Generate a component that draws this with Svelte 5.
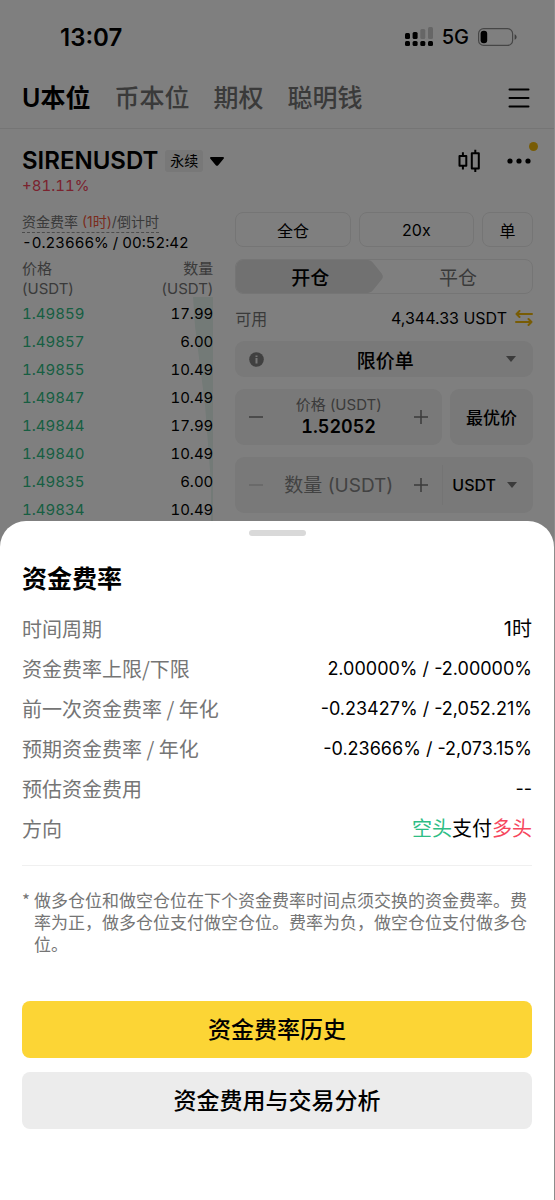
<script>
  const tabs = ['U本位', '币本位', '期权', '聪明钱'];
  let activeTab = $state('U本位');

  const bids = [
    { price: '1.49859', amount: '17.99' },
    { price: '1.49857', amount: '6.00' },
    { price: '1.49855', amount: '10.49' },
    { price: '1.49847', amount: '10.49' },
    { price: '1.49844', amount: '17.99' },
    { price: '1.49840', amount: '10.49' },
    { price: '1.49835', amount: '6.00' },
    { price: '1.49834', amount: '10.49' },
  ];

  const details = [
    { label: '时间周期', value: '1时', text: true },
    { label: '资金费率上限/下限', value: '2.00000% / -2.00000%' },
    { label: '前一次资金费率 / 年化', value: '-0.23427% / -2,052.21%' },
    { label: '预期资金费率 / 年化', value: '-0.23666% / -2,073.15%' },
    { label: '预估资金费用', value: '--' },
  ];

  let price = $state('1.52052');
  let quantity = $state('');

  function stepPrice(direction) {
    price = (Number(price) + direction * 0.00001).toFixed(5);
  }

  function stepQuantity(direction) {
    quantity = String(Math.max(0, Number(quantity) + direction));
  }
</script>

<div class="screen">
  <div class="status-bar">
    <span class="clock">13:07</span>
    <div class="status-icons">
      <svg width="28" height="20" viewBox="0 0 28 20" aria-hidden="true">
        <rect x="0" y="6" width="5" height="6" rx="1.5" />
        <rect x="7.6" y="5" width="5" height="7" rx="1.5" />
        <rect x="15.3" y="2" width="5" height="10" rx="1.5" opacity="0.2" />
        <rect x="23" y="0" width="5" height="12" rx="1.5" opacity="0.2" />
        <rect x="0" y="14" width="5" height="5" rx="1.5" />
        <rect x="7.6" y="14" width="5" height="5" rx="1.5" />
        <rect x="15.3" y="14" width="5" height="5" rx="1.5" />
        <rect x="23" y="14" width="5" height="5" rx="1.5" />
      </svg>
      <span class="network">5G</span>
      <svg width="39" height="18" viewBox="0 0 39 18" aria-hidden="true">
        <rect x="0.6" y="0.6" width="34" height="16.8" rx="5" fill="none" stroke="#000" stroke-opacity="0.45" stroke-width="1.2" />
        <rect x="2.6" y="2.8" width="6.6" height="12.4" rx="3" />
        <path d="M36.6 6.2c1.4.5 2 1.600 2 2.800s-.6 2.300-2 2.800z" opacity="0.5" />
      </svg>
    </div>
  </div>

  <nav class="tabs">
    {#each tabs as tab}
      <button class="tab" class:active={tab === activeTab} onclick={() => (activeTab = tab)}>{tab}</button>
    {/each}
    <button class="icon-btn menu" aria-label="菜单">
      <svg width="22" height="20" viewBox="0 0 22 20" fill="none" stroke="#000" stroke-width="2" stroke-linecap="round">
        <path d="M1.500 1.600h19M1.500 10h19M1.500 18.400h19" />
      </svg>
    </button>
  </nav>

  <header class="symbol">
    <div>
      <button class="symbol-name">
        <span class="pair">SIRENUSDT</span>
        <span class="badge">永续</span>
        <svg width="14" height="9" viewBox="0 0 14 9" aria-hidden="true">
          <path d="M1.200 0h11.600c1 0 1.500 1 .8 1.800L8 8.400c-.5.600-1.500.600-2 0L.4 1.800C-.3 1 .2 0 1.200 0z" />
        </svg>
      </button>
      <div class="change">+81.11%</div>
    </div>
    <div class="symbol-actions">
      <button class="icon-btn" aria-label="K线">
        <svg width="24" height="24" viewBox="0 0 24 24" fill="none" stroke="#000" stroke-width="2">
          <path d="M1.500 7h6.800v9.800H1.500zM4.900 3.200V7M4.900 16.800v3.800M13.800 4.200h7v15.400h-7zM17.300.8v3.400M17.300 19.600V23" stroke-linejoin="round" />
        </svg>
      </button>
      <button class="icon-btn more" aria-label="更多">
        <svg width="26" height="6" viewBox="0 0 26 6">
          <circle cx="4" cy="3" r="2.600" /><circle cx="13" cy="3" r="2.600" /><circle cx="22" cy="3" r="2.600" />
        </svg>
        <span class="dot"></span>
      </button>
    </div>
  </header>

  <main class="trade">
    <section class="book">
      <div class="funding-label">资金费率 <em>(1时)</em>/倒计时</div>
      <div class="funding-value">-0.23666% / 00:52:42</div>
      <div class="depth">
        <svg viewBox="0 0 20 230" preserveAspectRatio="none" aria-hidden="true">
          <path d="M0 0H20V230H18V190L15 150L12 110L7 70L2 30z" fill="#e6f5ee" />
        </svg>
        <table>
          <thead>
            <tr><th>价格<br />(USDT)</th><th>数量<br />(USDT)</th></tr>
          </thead>
          <tbody>
            {#each bids as bid}
              <tr><td class="bid">{bid.price}</td><td>{bid.amount}</td></tr>
            {/each}
          </tbody>
        </table>
      </div>
    </section>

    <section class="order">
      <div class="modes">
        <button>全仓</button>
        <button>20x</button>
        <button class="narrow">单</button>
      </div>
      <div class="sides">
        <svg viewBox="0 0 150 36" preserveAspectRatio="none" aria-hidden="true">
          <path d="M0 0H134Q137 0 139 3L148 15Q150 18 148 21L139 33Q137 36 134 36H0z" fill="#e2e2e2" />
        </svg>
        <button class="open">开仓</button>
        <button class="close">平仓</button>
      </div>
      <div class="available">
        <span class="muted">可用</span>
        <span class="balance">4,344.33 USDT</span>
        <button class="icon-btn" aria-label="划转">
          <svg width="18" height="16" viewBox="0 0 18 16" fill="none" stroke="#f0b90b" stroke-width="2" stroke-linecap="round" stroke-linejoin="round">
            <path d="M17 4H1.500M4.500 1l-3 3 3 3M1 12h15.500M13.500 9l3 3-3 3" />
          </svg>
        </button>
      </div>
      <button class="field order-type">
        <svg width="15" height="15" viewBox="0 0 15 15" aria-hidden="true">
          <circle cx="7.500" cy="7.500" r="7.300" fill="#808080" />
          <path d="M6.500 3.500h2v1.600h-2zM6.500 6h2v5.500h-2z" fill="#eee" />
        </svg>
        <span>限价单</span>
        <svg width="10" height="6" viewBox="0 0 10 6" aria-hidden="true"><path d="M0 0h10L5 6z" fill="#777" /></svg>
      </button>
      <div class="price-row">
        <div class="field stepper">
          <button class="step" aria-label="减少价格" onclick={() => stepPrice(-1)}>
            <svg width="16" height="16" viewBox="0 0 16 16"><path d="M1 8h14" /></svg>
          </button>
          <div class="stepper-body">
            <label for="price">价格 (USDT)</label>
            <input id="price" class="price" bind:value={price} />
          </div>
          <button class="step" aria-label="增加价格" onclick={() => stepPrice(1)}>
            <svg width="16" height="16" viewBox="0 0 16 16"><path d="M1 8h14M8 1v14" /></svg>
          </button>
        </div>
        <button class="field best">最优价</button>
      </div>
      <div class="field quantity-row">
        <div class="stepper">
          <button class="step faint" aria-label="减少数量" onclick={() => stepQuantity(-1)}>
            <svg width="16" height="16" viewBox="0 0 16 16"><path d="M1 8h14" /></svg>
          </button>
          <input class="quantity" aria-label="数量" placeholder="数量 (USDT)" bind:value={quantity} />
          <button class="step" aria-label="增加数量" onclick={() => stepQuantity(1)}>
            <svg width="16" height="16" viewBox="0 0 16 16"><path d="M1 8h14M8 1v14" /></svg>
          </button>
        </div>
        <button class="unit">
          USDT
          <svg width="10" height="6" viewBox="0 0 10 6" aria-hidden="true"><path d="M0 0h10L5 6z" fill="#777" /></svg>
        </button>
      </div>
    </section>
  </main>

  <div class="backdrop"></div>

  <div class="sheet" role="dialog" aria-labelledby="sheet-title">
    <div class="handle"></div>
    <h2 id="sheet-title">资金费率</h2>
    <dl>
      {#each details as row}
        <div class="detail">
          <dt>{row.label}</dt>
          <dd class:text={row.text}>{row.value}</dd>
        </div>
      {/each}
      <div class="detail">
        <dt>方向</dt>
        <dd class="text"><span class="short">空头</span>支付<span class="long">多头</span></dd>
      </div>
    </dl>
    <div class="note">
      <span>*</span>
      <p>做多仓位和做空仓位在下个资金费率时间点须交换的资金费率。费率为正，做多仓位支付做空仓位。费率为负，做空仓位支付做多仓位。</p>
    </div>
    <button class="action primary">资金费率历史</button>
    <button class="action">资金费用与交易分析</button>
  </div>
</div>

<style>
  :global(body) {
    background: #fff;
  }

  .screen {
    position: relative;
    min-height: 100vh;
    box-sizing: border-box;
    overflow: hidden;
    border-right: 1px solid #8c8c8c;
    background: #fff;
    color: #000;
    font-family: Inter, 'Noto Sans CJK SC', sans-serif;
    font-size: 16px;
  }

  button,
  input {
    margin: 0;
    padding: 0;
    border: 0;
    background: none;
    color: inherit;
    font: inherit;
  }

  button {
    cursor: pointer;
  }

  svg {
    display: block;
    flex: none;
  }

  .icon-btn {
    display: flex;
    align-items: center;
  }

  .muted {
    color: #757575;
  }

  .status-bar {
    display: flex;
    align-items: center;
    justify-content: space-between;
    height: 74px;
    padding: 0 37px 0 60px;
  }

  .clock {
    font-size: 24px;
    font-weight: 600;
  }

  .status-icons {
    display: flex;
    align-items: center;
    gap: 9px;
  }

  .network {
    font-size: 20px;
    font-weight: 500;
  }

  .tabs {
    display: flex;
    align-items: center;
    gap: 24px;
    height: 48px;
    padding: 0 24px 6px 22px;
    border-bottom: 1px solid #eaeaea;
  }

  .tab {
    color: #757575;
    font-size: 25px;
    font-weight: 500;
    line-height: 36px;
  }

  .tab.active {
    color: #000;
    font-weight: 600;
  }

  .menu {
    margin-left: auto;
  }

  .symbol {
    display: flex;
    align-items: flex-start;
    justify-content: space-between;
    padding: 16px 22px 0;
  }

  .symbol-name {
    display: flex;
    align-items: center;
    gap: 7px;
    line-height: 32px;
  }

  .pair {
    font-size: 24px;
    font-weight: 600;
  }

  .badge {
    padding: 0 5px;
    border-radius: 3px;
    background: #f0f0f0;
    font-size: 14px;
    line-height: 22px;
  }

  .change {
    color: #f6465d;
    font-size: 15px;
    font-variant-numeric: tabular-nums;
    line-height: 17px;
  }

  .symbol-actions {
    display: flex;
    align-items: center;
    gap: 24px;
    height: 32px;
  }

  .more {
    position: relative;
  }

  .dot {
    position: absolute;
    top: -16px;
    right: -6px;
    width: 9px;
    height: 9px;
    border-radius: 50%;
    background: #f0b90b;
  }

  .trade {
    display: flex;
    gap: 22px;
    padding: 18px 21px 0 22px;
  }

  .book {
    flex: 9;
    min-width: 0;
  }

  .funding-label {
    width: fit-content;
    border-bottom: 1px dashed #999;
    color: #757575;
    font-size: 14px;
    line-height: 20px;
  }

  .funding-label em {
    color: #f5593d;
    font-style: normal;
  }

  .funding-value {
    font-size: 15px;
    font-variant-numeric: tabular-nums;
    line-height: 20px;
    white-space: nowrap;
  }

  .depth {
    position: relative;
    margin-top: 6px;
  }

  .depth svg {
    position: absolute;
    right: 0;
    bottom: 0;
    width: 20px;
    height: 226px;
  }

  table {
    position: relative;
    width: 100%;
    border-collapse: collapse;
  }

  th,
  td {
    padding: 0;
    text-align: left;
  }

  th {
    color: #757575;
    font-size: 15px;
    font-weight: 400;
    line-height: 20px;
  }

  td {
    height: 28px;
    font-size: 15px;
    font-variant-numeric: tabular-nums;
  }

  th:last-child,
  td:last-child {
    text-align: right;
  }

  .bid {
    color: #2ebd85;
  }

  .order {
    flex: 14;
    display: flex;
    flex-direction: column;
    gap: 12px;
    min-width: 0;
  }

  .modes {
    display: flex;
    gap: 8px;
  }

  .modes button {
    flex: 1;
    box-sizing: border-box;
    height: 35px;
    border: 1px solid #eaeaea;
    border-radius: 8px;
    font-size: 16px;
  }

  .modes .narrow {
    flex: 0 0 51px;
  }

  .sides {
    position: relative;
    display: flex;
    box-sizing: border-box;
    height: 35px;
    overflow: hidden;
    border: 1px solid #eaeaea;
    border-radius: 8px;
    font-size: 19px;
  }

  .sides svg {
    position: absolute;
    inset: 0;
    width: 50%;
    height: 100%;
  }

  .sides button {
    position: relative;
    flex: 1;
  }

  .open {
    font-weight: 500;
  }

  .close {
    color: #757575;
  }

  .available {
    display: flex;
    align-items: center;
    gap: 8px;
    height: 23px;
  }

  .balance {
    margin-left: auto;
  }

  .field {
    border-radius: 9px;
    background: #f2f2f2;
  }

  .order-type {
    display: flex;
    align-items: center;
    justify-content: space-between;
    height: 36px;
    padding: 0 17px 0 14px;
    font-size: 19px;
    font-weight: 500;
  }

  .price-row {
    display: flex;
    gap: 8px;
    height: 56px;
  }

  .stepper {
    flex: 1;
    display: flex;
    align-items: center;
    min-width: 0;
    padding: 0 13px;
  }

  .stepper-body {
    flex: 1;
    display: flex;
    flex-direction: column;
    align-items: center;
    min-width: 0;
  }

  .stepper-body label {
    color: #757575;
    font-size: 15px;
    line-height: 20px;
  }

  .price,
  .quantity {
    width: 100%;
    min-width: 0;
    text-align: center;
  }

  .price {
    font-size: 18px;
    font-variant-numeric: tabular-nums;
    font-weight: 600;
    line-height: 24px;
  }

  .quantity {
    flex: 1;
    font-size: 19px;
  }

  .quantity::placeholder {
    color: #858585;
    opacity: 1;
  }

  .step path {
    stroke: #777;
    stroke-width: 1.5;
  }

  .faint {
    opacity: 0.3;
  }

  .best {
    flex: 0 0 83px;
    padding-bottom: 2px;
    font-size: 17px;
    font-weight: 500;
  }

  .quantity-row {
    display: flex;
    align-items: center;
    height: 56px;
  }

  .unit {
    display: flex;
    align-items: center;
    gap: 11px;
    height: 40px;
    padding: 0 16px 0 9px;
    border-left: 1px solid #e8e8e8;
    font-weight: 500;
  }

  .backdrop {
    position: absolute;
    inset: 0;
    background: rgba(0, 0, 0, 0.5);
  }

  .sheet {
    position: absolute;
    right: 0;
    bottom: 0;
    left: 0;
    padding: 9px 22px 71px;
    border-radius: 26px 26px 0 0;
    background: #fff;
  }

  .handle {
    width: 57px;
    height: 6px;
    margin: 0 auto;
    border-radius: 3px;
    background: #d9d9d9;
  }

  h2 {
    margin: 24px 0 10px;
    font-size: 25px;
    font-weight: 700;
    line-height: 39px;
  }

  dl {
    margin: 0;
    padding-bottom: 16px;
    border-bottom: 1px solid #f0f0f0;
  }

  .detail {
    display: flex;
    align-items: center;
    justify-content: space-between;
    line-height: 40px;
  }

  dt {
    color: #757575;
    font-family: 'Noto Sans CJK SC', sans-serif;
    font-size: 20px;
  }

  dd {
    margin: 0;
    font-size: 18px;
  }

  .text {
    font-size: 20px;
  }

  .short {
    color: #2ebd85;
  }

  .long {
    color: #f6465d;
  }

  .note {
    display: flex;
    gap: 4px;
    margin: 23px 0 46px;
    color: #757575;
    font-family: 'Noto Sans CJK SC', sans-serif;
    font-size: 17px;
    line-height: 22px;
  }

  .note p {
    margin: 0;
  }

  .action {
    display: block;
    width: 100%;
    height: 57px;
    margin-top: 14px;
    padding-bottom: 3px;
    border-radius: 8px;
    background: #ececec;
    font-size: 23px;
    font-weight: 500;
  }

  .primary {
    background: #fcd535;
  }
</style>
